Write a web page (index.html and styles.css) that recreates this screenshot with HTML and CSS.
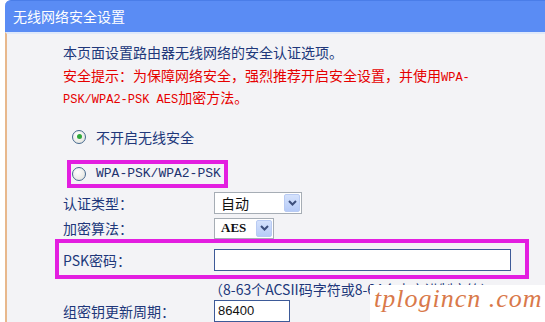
FILE: index.html
```html
<!DOCTYPE html>
<html lang="zh-CN">
<head>
  <meta charset="UTF-8" />
  <meta name="viewport" content="width=device-width, initial-scale=1.0"/>
  <title>无线网络安全设置</title>
  <link rel="stylesheet" href="styles.css">
</head>
<body>
  <div class="panel">
    <div class="panel-title">无线网络安全设置</div>
    <div class="panel-body">
      <div class="intro">
        <p>本页面设置路由器无线网络的安全认证选项。</p>
        <p class="warn">安全提示：为保障网络安全，强烈推荐开启安全设置，并使用<span class="en">WPA-PSK/WPA2-PSK AES</span>加密方法。</p>
      </div>

      <label class="radio-row">
        <span class="radio checked"></span>
        <span>不开启无线安全</span>
      </label>

      <div class="mark mark-small">
        <label class="radio-row">
          <span class="radio"></span>
          <span class="en-label">WPA-PSK/WPA2-PSK</span>
        </label>
      </div>

      <div class="row row-auth">
        <span>认证类型：</span>
        <div class="select select-wide">
          <span class="select-text">自动</span>
          <span class="select-btn">
            <svg width="9" height="6" viewBox="0 0 9 6"><path d="M1 1l3.5 3.5L8 1" fill="none" stroke="#3d4f7c" stroke-width="2"/></svg>
          </span>
        </div>
      </div>

      <div class="row row-enc">
        <span>加密算法：</span>
        <div class="select select-narrow">
          <span class="select-text en-select">AES</span>
          <span class="select-btn">
            <svg width="9" height="6" viewBox="0 0 9 6"><path d="M1 1l3.5 3.5L8 1" fill="none" stroke="#3d4f7c" stroke-width="2"/></svg>
          </span>
        </div>
      </div>

      <div class="mark mark-wide">
        <div class="row">
          <span>PSK密码：</span>
          <input class="field field-psk" type="text">
        </div>
      </div>

      <div class="hint">（8-63个ACSII码字符或8-64个十六进制字符）</div>

      <div class="row">
        <span>组密钥更新周期：</span>
        <input class="field field-period" type="text" value="86400">
      </div>
    </div>
  </div>

  <div class="watermark">tplogincn .com</div>
</body>
</html>
```

FILE: styles.css
```css
body {
  margin: 0;
  width: 545px;
  height: 322px;
  overflow: hidden;
  background-color: #ffffff;
  font-family: "Noto Sans CJK SC", sans-serif;
  font-size: 14px;
  color: #20377a;
  position: relative;
}

.panel {
  margin-left: 5px;
}

.panel-title {
  height: 32px;
  line-height: 31px;
  padding-left: 8px;
  background-color: #5a8cf4;
  border-top: 1px solid #4a7de8;
  box-sizing: border-box;
  border-top-left-radius: 6px;
  color: #ffffff;
  font-size: 14px;
}

.panel-body {
  border-top: 2px solid #dfe9fb;
  border-left: 2px solid #e8b88c;
  background-color: #f3f3f6;
  padding-left: 56px;
  height: 300px;
}

.intro {
  width: 425px;
  padding-top: 7px;
}

.intro p {
  margin: 0;
  line-height: 22.5px;
}

.warn {
  color: #e60000;
}

.en {
  font-family: "Liberation Mono", monospace;
  font-size: 12px;
  line-height: 12px;
}

.radio-row {
  display: flex;
  align-items: center;
  gap: 10px;
  height: 22px;
  margin-top: 17px;
  padding-left: 9px;
}

.radio {
  width: 12px;
  height: 12px;
  border: 1px solid #45698f;
  border-radius: 50%;
  background: radial-gradient(circle at 40% 35%, #ffffff 0%, #e2e2dc 90%);
  display: flex;
  align-items: center;
  justify-content: center;
}

.radio.checked::after {
  content: "";
  width: 5px;
  height: 5px;
  border-radius: 50%;
  background-color: #2fa83a;
}

.mark {
  border: 4px solid #e31ee0;
}

.mark-small {
  width: 153px;
  height: 20px;
  margin: 12px 0 0 4px;
}

.mark-small .radio-row {
  margin-top: 0;
  height: 20px;
  padding-left: 1px;
}

.en-label {
  font-family: "Liberation Mono", monospace;
  font-size: 13px;
  color: #1d3270;
}

.row {
  display: grid;
  grid-template-columns: 151px auto;
  align-items: center;
  height: 22px;
}

.row-auth {
  margin-top: 4px;
}

.row-enc {
  margin-top: 4px;
  height: 21px;
}

.select {
  display: flex;
  align-items: center;
  justify-content: space-between;
  box-sizing: border-box;
  height: 22px;
  border: 1px solid #a6adb5;
  background-color: #ffffff;
  padding: 1px 1px 1px 6px;
}

.select-wide {
  width: 88px;
}

.select-narrow {
  width: 60px;
  height: 21px;
}

.select-text {
  color: #111111;
  font-size: 14px;
}

.en-select {
  font-family: "Liberation Serif", serif;
  font-weight: bold;
  font-size: 13px;
}

.select-btn {
  width: 16px;
  height: 100%;
  box-sizing: border-box;
  border: 1px solid #b9cbf3;
  border-radius: 2px;
  background: linear-gradient(#d5e2fc, #b6cbf8);
  display: flex;
  align-items: center;
  justify-content: center;
}

.mark-wide {
  width: 462px;
  margin-left: -8px;
  padding: 6px 0 4px 4px;
  height: 22px;
}

.field {
  box-sizing: border-box;
  height: 22px;
  border: 1px solid #3d5a98;
  background-color: #ffffff;
  padding: 0 3px;
  font-family: "Liberation Sans", sans-serif;
  font-size: 13px;
  color: #111111;
  outline: none;
}

.field-psk {
  width: 297px;
}

.field-period {
  width: 76px;
}

.hint {
  height: 21px;
  line-height: 21px;
  padding-left: 146px;
  font-size: 14px;
  white-space: nowrap;
}

.watermark {
  position: absolute;
  left: 370px;
  top: 285px;
  right: 0;
  bottom: 0;
  background-color: #ffffff;
  padding-left: 4px;
  font-family: "Liberation Serif", serif;
  font-style: italic;
  font-size: 26px;
  line-height: 28px;
  letter-spacing: 1px;
  color: #d9794a;
}
```
